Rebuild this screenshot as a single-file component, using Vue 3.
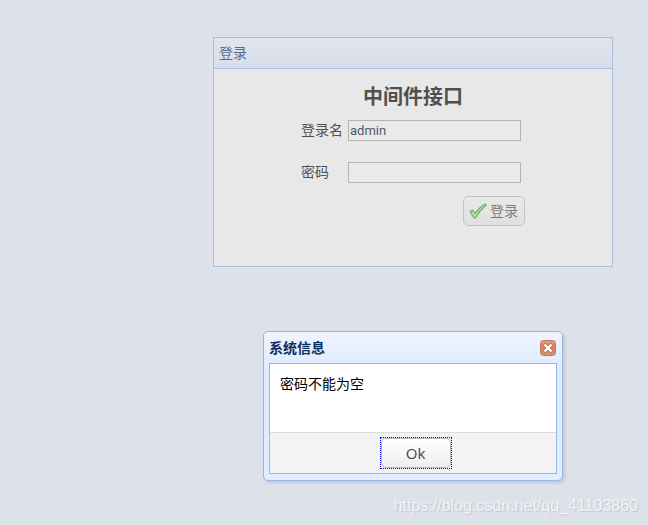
<template>
  <div class="page">
    <form class="panel" @submit.prevent="login">
      <div class="panel-header">登录</div>
      <div class="panel-body">
        <h1 class="title">中间件接口</h1>
        <div class="fields">
          <div class="field">
            <label for="username">登录名</label>
            <input id="username" v-model="username" type="text" />
          </div>
          <div class="field">
            <label for="password">密码</label>
            <input id="password" v-model="password" type="password" />
          </div>
          <button class="login-btn" type="submit">
            <svg width="18" height="18" viewBox="0 0 18 18">
              <path d="M1 9.5L3.5 8L6 11.5C9 7.5 12 3.5 16.5 2L17 3C13 6.5 9.5 10.5 6.5 16H5Z" fill="#b4e39a" stroke="#6aa86c" stroke-width="1.1" stroke-linejoin="round" />
            </svg>
            <span>登录</span>
          </button>
        </div>
      </div>
    </form>

    <div v-if="message" class="dialog" role="dialog" aria-labelledby="dialog-title">
      <div class="dialog-header">
        <span id="dialog-title">系统信息</span>
        <button class="close-btn" type="button" aria-label="关闭" @click="message = ''">
          <svg width="16" height="16" viewBox="0 0 16 16">
            <defs>
              <linearGradient id="close-fill" x1="0" y1="0" x2="0" y2="1">
                <stop offset="0" stop-color="#e6a083" />
                <stop offset="0.4" stop-color="#dc7b5d" />
                <stop offset="1" stop-color="#cf9a6c" />
              </linearGradient>
            </defs>
            <rect x="0.5" y="0.5" width="15" height="15" rx="3" fill="url(#close-fill)" stroke="#bb7a67" />
            <path d="M4 4L12 12M12 4L4 12" stroke="#c46a55" stroke-width="3.6" />
            <path d="M4.5 4.5L11.5 11.5M11.5 4.5L4.5 11.5" stroke="#fff" stroke-width="2.4" />
          </svg>
        </button>
      </div>
      <div class="dialog-body">
        <div class="dialog-message">{{ message }}</div>
        <div class="dialog-footer">
          <span class="focus-ring">
            <button class="ok-btn" type="button" @click="message = ''">Ok</button>
          </span>
        </div>
      </div>
    </div>

    <div class="watermark">https://blog.csdn.net/qq_41103860</div>
  </div>
</template>

<script setup>
import { ref } from 'vue';

const username = ref('admin');
const password = ref('');
const message = ref('密码不能为空');

const login = () => {
  if (!password.value) {
    message.value = '密码不能为空';
  }
};
</script>

<style>
body {
  margin: 0;
  background: #dde1ea;
}
</style>

<style scoped>
.page {
  position: relative;
  box-sizing: border-box;
  min-height: 100vh;
  padding: 37px 0 44px 178px;
  display: flex;
  flex-direction: column;
  align-items: center;
  gap: 64px;
  font-family: "Liberation Sans", "Noto Sans CJK SC", sans-serif;
  font-size: 14px;
}

button,
input {
  box-sizing: border-box;
  font-family: inherit;
}

/* 登录面板 */
.panel {
  box-sizing: border-box;
  width: 100%;
  max-width: 400px;
  border: 1px solid #a9bfdf;
}

.panel-header {
  padding: 0 5px;
  line-height: 30px;
  color: #576b8e;
  background: linear-gradient(to bottom, #e1e4ec, #d7deea);
  border-bottom: 1px solid #a9bfdf;
}

.panel-body {
  padding: 13px 0 40px;
  background: #e8e8e8;
}

.title {
  margin: 0 0 8px;
  font-size: 20px;
  line-height: 30px;
  text-align: center;
  color: #505050;
}

.fields {
  width: 224px;
  margin: 0 auto;
  display: flex;
  flex-direction: column;
}

.field {
  display: flex;
  align-items: center;
  margin-bottom: 21px;
  color: #505050;
}

.field label {
  width: 47px;
  line-height: 21px;
}

.field input {
  width: 173px;
  height: 21px;
  padding: 1px;
  border: 1px solid #b4b4b4;
  background: #eaeaea;
  font-family: Roboto, sans-serif;
  font-size: 13px;
  color: #505868;
}

.login-btn {
  align-self: flex-end;
  display: flex;
  align-items: center;
  gap: 3px;
  height: 30px;
  margin-top: -8px;
  padding: 0 6px 0 5px;
  border: 1px solid #c3c3c3;
  border-radius: 5px;
  background: linear-gradient(to bottom, #e9e9e9, #e0e0e0);
  font-size: 14px;
  line-height: 28px;
  color: #7c7c7c;
}

/* 消息框 */
.dialog {
  box-sizing: border-box;
  width: 100%;
  max-width: 300px;
  padding: 0 5px 6px;
  border: 1px solid #95b8e7;
  border-radius: 5px;
  background: linear-gradient(to bottom, #eff5ff, #e0ecff 32px);
  box-shadow: 2px 2px 3px #c3c7ce;
}

.dialog-header {
  display: flex;
  align-items: center;
  justify-content: space-between;
  height: 31px;
  font-weight: bold;
  line-height: 16px;
  color: #0e2d5f;
}

.close-btn {
  width: 16px;
  height: 16px;
  margin-right: 1px;
  padding: 0;
  border: none;
  background: none;
}

.close-btn svg {
  display: block;
}

.dialog-body {
  border: 1px solid #95b8e7;
  background: #fff;
}

.dialog-message {
  box-sizing: border-box;
  min-height: 68px;
  padding: 10px;
  line-height: 20px;
  color: #000;
}

.dialog-footer {
  display: flex;
  justify-content: center;
  padding: 4px 0 4px 5px;
  border-top: 1px solid #ddd;
  background: #f3f3f3;
}

.focus-ring {
  border: 1px dotted #0000d0;
}

.ok-btn {
  display: block;
  width: 70px;
  height: 30px;
  padding: 0;
  border: 1px solid #bbb;
  border-radius: 5px;
  background: linear-gradient(to bottom, #fff, #eee);
  font-family: "Open Sans", sans-serif;
  font-size: 15px;
  line-height: 26px;
  color: #444;
}

.watermark {
  position: absolute;
  right: 10px;
  bottom: 9px;
  font-size: 16px;
  line-height: 20px;
  color: #f1f3f6;
  text-shadow: 1px 1px 1px #c0c4cc;
}
</style>
